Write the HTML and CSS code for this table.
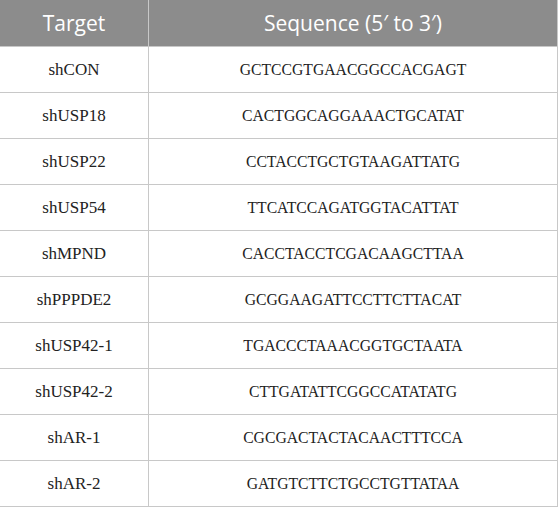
FILE: index.html
```html
<!DOCTYPE html>
<html>
<head>
<meta charset="utf-8">
<link rel="stylesheet" href="styles.css">
</head>
<body>
<table class="seq-table">
  <thead>
    <tr><th class="col-target">Target</th><th>Sequence (5′ to 3′)</th></tr>
  </thead>
  <tbody>
    <tr><td>shCON</td><td class="seq">GCTCCGTGAACGGCCACGAGT</td></tr>
    <tr><td>shUSP18</td><td class="seq">CACTGGCAGGAAACTGCATAT</td></tr>
    <tr><td>shUSP22</td><td class="seq">CCTACCTGCTGTAAGATTATG</td></tr>
    <tr><td>shUSP54</td><td class="seq">TTCATCCAGATGGTACATTAT</td></tr>
    <tr><td>shMPND</td><td class="seq">CACCTACCTCGACAAGCTTAA</td></tr>
    <tr><td>shPPPDE2</td><td class="seq">GCGGAAGATTCCTTCTTACAT</td></tr>
    <tr><td>shUSP42-1</td><td class="seq">TGACCCTAAACGGTGCTAATA</td></tr>
    <tr><td>shUSP42-2</td><td class="seq">CTTGATATTCGGCCATATATG</td></tr>
    <tr><td>shAR-1</td><td class="seq">CGCGACTACTACAACTTTCCA</td></tr>
    <tr><td>shAR-2</td><td class="seq">GATGTCTTCTGCCTGTTATAA</td></tr>
  </tbody>
</table>
</body>
</html>
```
FILE: styles.css
```css
html, body {
  margin: 0;
  padding: 0;
  background: #ffffff;
}
.seq-table {
  width: 558px;
  border-collapse: collapse;
  table-layout: fixed;
}
.seq-table th {
  height: 46px;
  padding: 0;
  background: #8c8c8c;
  color: #ffffff;
  font-family: "Open Sans", sans-serif;
  font-weight: 400;
  font-size: 21px;
  text-align: center;
  border-right: 1px solid #c8c8c8;
  border-bottom: 1px solid #c8c8c8;
}
.seq-table th.col-target {
  width: 148px;
}
.seq-table td {
  height: 45px;
  padding: 0;
  font-family: "Liberation Serif", serif;
  font-size: 17px;
  color: #222222;
  text-align: center;
  border-right: 1px solid #c8c8c8;
  border-bottom: 1px solid #c8c8c8;
}
.seq-table td.seq {
  font-size: 15.7px;
}
```
